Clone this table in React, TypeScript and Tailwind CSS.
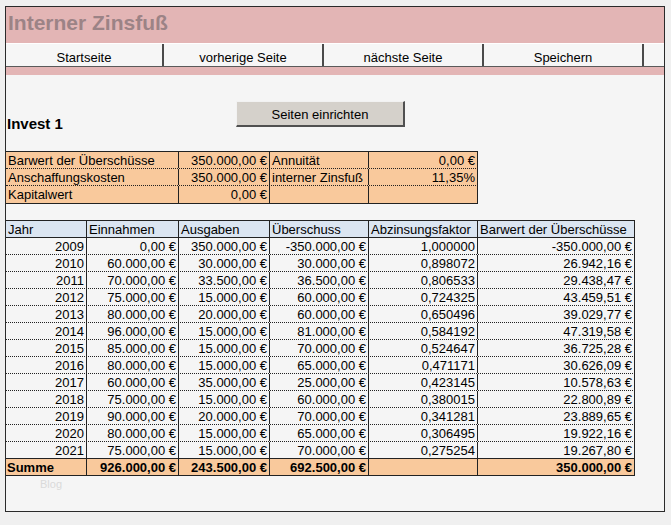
import React from "react";

const FONT = { fontFamily: '"Liberation Sans", Arial, sans-serif' };

const rows: string[][] = [
  ["2009", "0,00 €", "350.000,00 €", "-350.000,00 €", "1,000000", "-350.000,00 €"],
  ["2010", "60.000,00 €", "30.000,00 €", "30.000,00 €", "0,898072", "26.942,16 €"],
  ["2011", "70.000,00 €", "33.500,00 €", "36.500,00 €", "0,806533", "29.438,47 €"],
  ["2012", "75.000,00 €", "15.000,00 €", "60.000,00 €", "0,724325", "43.459,51 €"],
  ["2013", "80.000,00 €", "20.000,00 €", "60.000,00 €", "0,650496", "39.029,77 €"],
  ["2014", "96.000,00 €", "15.000,00 €", "81.000,00 €", "0,584192", "47.319,58 €"],
  ["2015", "85.000,00 €", "15.000,00 €", "70.000,00 €", "0,524647", "36.725,28 €"],
  ["2016", "80.000,00 €", "15.000,00 €", "65.000,00 €", "0,471171", "30.626,09 €"],
  ["2017", "60.000,00 €", "35.000,00 €", "25.000,00 €", "0,423145", "10.578,63 €"],
  ["2018", "75.000,00 €", "15.000,00 €", "60.000,00 €", "0,380015", "22.800,89 €"],
  ["2019", "90.000,00 €", "20.000,00 €", "70.000,00 €", "0,341281", "23.889,65 €"],
  ["2020", "80.000,00 €", "15.000,00 €", "65.000,00 €", "0,306495", "19.922,16 €"],
  ["2021", "75.000,00 €", "15.000,00 €", "70.000,00 €", "0,275254", "19.267,80 €"],
];

const widths = ["w-[81px]", "w-[92px]", "w-[91px]", "w-[99px]", "w-[109px]", "w-[157px]"];
const headers = ["Jahr", "Einnahmen", "Ausgaben", "Überschuss", "Abzinsungsfaktor", "Barwert der Überschüsse"];

function NavButton({ label, w }: { label: string; w: string }) {
  return (
    <div className={`${w} shrink-0 h-full border-r-2 border-[#4a4a4a] text-center text-[13px] leading-[15px] pt-[6px] text-black`}>
      {label}
    </div>
  );
}

export default function App() {
  return (
    <div className="w-[671px] h-[525px] bg-[#f0f0f0] pt-[6px] pl-[5px] overflow-hidden" style={FONT}>
      <div className="w-[660px] h-[506px] border border-[#2a2a2a] bg-[#f5f5f5] flex flex-col">
        {/* Title band */}
        <div className="h-[36px] bg-[#e3b5b5] pl-[2px] pt-[4px] shrink-0">
          <div className="text-[21px] leading-[24px] font-bold text-[#9c8386]">Interner Zinsfuß</div>
        </div>
        {/* Nav bar */}
        <div className="h-[24px] shrink-0 flex bg-[#f6f6f6] border-t border-white border-b border-b-[#5a5a5a]">
          <NavButton label="Startseite" w="w-[158px]" />
          <NavButton label="vorherige Seite" w="w-[160px]" />
          <NavButton label="nächste Seite" w="w-[160px]" />
          <NavButton label="Speichern" w="w-[160px]" />
          <div className="flex-1" />
        </div>
        <div className="h-[8px] bg-[#e3b5b5] shrink-0" />

        {/* Invest + button */}
        <div className="h-[76px] flex shrink-0">
          <div className="w-[230px] shrink-0 pl-[1px] pt-[40px] text-[15px] leading-[17px] font-bold text-black">
            Invest 1
          </div>
          <div className="mt-[26px] w-[169px] h-[26px] bg-[#d5d1cb] border-t border-l border-[#f2f2f2] border-r-2 border-b-2 border-r-[#505050] border-b-[#505050] text-center text-[13px] leading-[15px] pt-[5px] text-black">
            Seiten einrichten
          </div>
        </div>

        {/* Summary table */}
        <div className="w-[472px] shrink-0 bg-[#f9c99c] border-t border-b border-[#222] text-[13px] text-black">
          {[
            ["Barwert der Überschüsse", "350.000,00 €", "Annuität", "0,00 €"],
            ["Anschaffungskosten", "350.000,00 €", "interner Zinsfuß", "11,35%"],
            ["Kapitalwert", "0,00 €", "", ""],
          ].map((r, i) => (
            <div
              key={i}
              className={`flex h-[17px] ${i < 2 ? "border-b border-dotted border-[#222]" : ""}`}
            >
              <div className="w-[173px] shrink-0 border-r border-[#222] pl-[2px] pt-[1px] leading-[15px] whitespace-nowrap">{r[0]}</div>
              <div className="w-[91px] shrink-0 border-r border-[#222] pr-[2px] pt-[1px] leading-[15px] text-right whitespace-nowrap">{r[1]}</div>
              <div className="w-[99px] shrink-0 border-r border-[#222] pl-[2px] pt-[1px] leading-[15px] whitespace-nowrap">{r[2]}</div>
              <div className="w-[109px] shrink-0 border-r border-[#222] pr-[2px] pt-[1px] leading-[15px] text-right whitespace-nowrap">{r[3]}</div>
            </div>
          ))}
        </div>

        <div className="h-[16px] shrink-0" />

        {/* Main table */}
        <div className="w-[629px] shrink-0 text-[13px] text-black">
          <div className="flex h-[18px] bg-[#dbe5f1] border-t border-b border-[#222]">
            {headers.map((h, i) => (
              <div key={i} className={`${widths[i]} shrink-0 border-r border-[#222] pl-[2px] pt-[1px] leading-[15px] whitespace-nowrap`}>
                {h}
              </div>
            ))}
          </div>
          {rows.map((r, ri) => (
            <div
              key={ri}
              className={`flex h-[17px] border-b ${ri === rows.length - 1 ? "border-solid border-[#222]" : "border-dotted border-[#222]"}`}
            >
              {r.map((c, ci) => (
                <div key={ci} className={`${widths[ci]} shrink-0 border-r border-[#222] pr-[2px] pt-[1px] leading-[15px] text-right whitespace-nowrap`}>
                  {c}
                </div>
              ))}
            </div>
          ))}
          <div className="flex h-[17px] bg-[#f9c99c] border-b border-[#222] font-bold">
            {["Summe", "926.000,00 €", "243.500,00 €", "692.500,00 €", "", "350.000,00 €"].map((c, ci) => (
              <div
                key={ci}
                className={`${widths[ci]} shrink-0 border-r border-[#222] pt-[1px] leading-[15px] whitespace-nowrap ${ci === 0 ? "pl-[1px] text-left" : "pr-[2px] text-right"}`}
              >
                {c}
              </div>
            ))}
          </div>
          <div className="pl-[34px] pt-[2px] text-[11px] leading-[12px] text-[#dadada]">Blog</div>
        </div>
      </div>
    </div>
  );
}
